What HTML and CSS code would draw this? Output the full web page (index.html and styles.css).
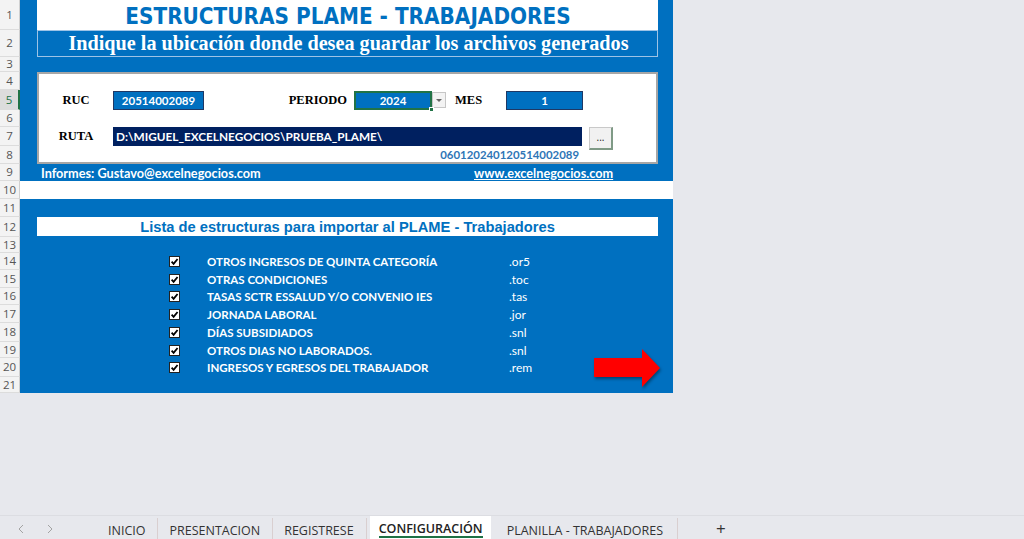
FILE: index.html
```html
<!DOCTYPE html>
<html lang="es">
<head>
<meta charset="utf-8">
<title>Estructuras PLAME - Trabajadores</title>
<link rel="stylesheet" href="styles.css">
</head>
<body>
<div class="app">
  <div class="sheet-grid">
    <div class="rh">1</div>
    <div class="rh">2</div>
    <div class="rh">3</div>
    <div class="rh">4</div>
    <div class="rh rh-active">5</div>
    <div class="rh">6</div>
    <div class="rh">7</div>
    <div class="rh">8</div>
    <div class="rh">9</div>
    <div class="rh">10</div>
    <div class="rh">11</div>
    <div class="rh">12</div>
    <div class="rh">13</div>
    <div class="rh">14</div>
    <div class="rh">15</div>
    <div class="rh">16</div>
    <div class="rh">17</div>
    <div class="rh">18</div>
    <div class="rh">19</div>
    <div class="rh">20</div>
    <div class="rh">21</div>

    <section class="top">
      <div class="title">ESTRUCTURAS PLAME - TRABAJADORES</div>
      <div class="subtitle">Indique la ubicación donde desea guardar los archivos generados</div>
      <div class="spacer"></div>
      <div class="panel">
        <div class="prow prow-4"></div>
        <div class="prow prow-5">
          <div class="lbl">RUC</div>
          <div class="cell cell-ruc">20514002089</div>
          <div class="lbl lbl-periodo">PERIODO</div>
          <div class="cell cell-year">2024<span class="handle"></span></div>
          <div class="dd"><span class="dd-arrow"></span></div>
          <div class="lbl lbl-mes">MES</div>
          <div class="cell cell-mes">1</div>
        </div>
        <div class="prow prow-6"></div>
        <div class="prow prow-7">
          <div class="lbl">RUTA</div>
          <div class="cell cell-ruta">D:\MIGUEL_EXCELNEGOCIOS\PRUEBA_PLAME\</div>
          <div class="btn-dots">...</div>
        </div>
        <div class="prow prow-8">
          <div class="code">060120240120514002089</div>
        </div>
      </div>
      <div class="footer">
        <div class="mail">Informes: Gustavo@excelnegocios.com</div>
        <div class="web">www.excelnegocios.com</div>
      </div>
    </section>

    <div class="blank-row"></div>

    <section class="bottom">
      <div class="brow-11"></div>
      <div class="lista">Lista de estructuras para importar al PLAME - Trabajadores</div>
      <div class="brow-13"></div>
      <div class="item r14"><span class="cb"><svg viewBox="0 0 10 10" width="9" height="9"><path d="M1.8 5.2 L4 7.6 L8.4 2.2" fill="none" stroke="#000" stroke-width="2"/></svg></span><span class="item-lbl">OTROS INGRESOS DE QUINTA CATEGORÍA</span><span class="ext">.or5</span></div>
      <div class="item r15"><span class="cb"><svg viewBox="0 0 10 10" width="9" height="9"><path d="M1.8 5.2 L4 7.6 L8.4 2.2" fill="none" stroke="#000" stroke-width="2"/></svg></span><span class="item-lbl">OTRAS CONDICIONES</span><span class="ext">.toc</span></div>
      <div class="item r16"><span class="cb"><svg viewBox="0 0 10 10" width="9" height="9"><path d="M1.8 5.2 L4 7.6 L8.4 2.2" fill="none" stroke="#000" stroke-width="2"/></svg></span><span class="item-lbl">TASAS SCTR ESSALUD Y/O CONVENIO IES</span><span class="ext">.tas</span></div>
      <div class="item r17"><span class="cb"><svg viewBox="0 0 10 10" width="9" height="9"><path d="M1.8 5.2 L4 7.6 L8.4 2.2" fill="none" stroke="#000" stroke-width="2"/></svg></span><span class="item-lbl">JORNADA LABORAL</span><span class="ext">.jor</span></div>
      <div class="item r18"><span class="cb"><svg viewBox="0 0 10 10" width="9" height="9"><path d="M1.8 5.2 L4 7.6 L8.4 2.2" fill="none" stroke="#000" stroke-width="2"/></svg></span><span class="item-lbl">DÍAS SUBSIDIADOS</span><span class="ext">.snl</span></div>
      <div class="item r19"><span class="cb"><svg viewBox="0 0 10 10" width="9" height="9"><path d="M1.8 5.2 L4 7.6 L8.4 2.2" fill="none" stroke="#000" stroke-width="2"/></svg></span><span class="item-lbl">OTROS DIAS NO LABORADOS.</span><span class="ext">.snl</span></div>
      <div class="item r20"><span class="cb"><svg viewBox="0 0 10 10" width="9" height="9"><path d="M1.8 5.2 L4 7.6 L8.4 2.2" fill="none" stroke="#000" stroke-width="2"/></svg></span><span class="item-lbl">INGRESOS Y EGRESOS DEL TRABAJADOR</span><span class="ext">.rem</span></div>
      <div class="brow-21"></div>
      <svg class="arrow" viewBox="0 0 70 42" width="70" height="42"><polygon points="1,9 49,9 49,0 67,19 49,38 49,28 1,28" fill="#ff0000"/></svg>
    </section>
  </div>

  <div class="fill"></div>

  <nav class="tabbar">
    <span class="nav-arrow"><svg viewBox="0 0 6 10" width="6" height="10"><path d="M5 1 L1 5 L5 9" fill="none" stroke="#a3a3a3" stroke-width="1"/></svg></span>
    <span class="nav-arrow nav-next"><svg viewBox="0 0 6 10" width="6" height="10"><path d="M1 1 L5 5 L1 9" fill="none" stroke="#a3a3a3" stroke-width="1"/></svg></span>
    <span class="tab tab-first">INICIO</span>
    <span class="tab">PRESENTACION</span>
    <span class="tab">REGISTRESE</span>
    <span class="tab tab-active">CONFIGURACIÓN</span>
    <span class="tab tab-last">PLANILLA - TRABAJADORES</span>
    <span class="tab-add">+</span>
  </nav>
</div>
</body>
</html>
```

FILE: styles.css
```css
* { box-sizing: border-box; }

html, body {
  margin: 0;
  padding: 0;
  width: 1024px;
  height: 539px;
  overflow: hidden;
}

body {
  background: #e7e8ed;
  font-family: "Lato", "Open Sans", sans-serif;
}

.app {
  display: flex;
  flex-direction: column;
  height: 539px;
}

.sheet-grid {
  display: grid;
  grid-template-columns: 20px 653px;
  grid-template-rows: 30px 27px 15px 18px 20px 17px 19px 18px 17px 18px 18px 20px 16px 17px 18px 17px 18px 19px 16px 19px 16px;
}

/* Row headers */
.rh {
  grid-column: 1;
  background: #f3f3f3;
  border-bottom: 1px solid #dcdcdc;
  border-right: 1px solid #d0d0d0;
  color: #555;
  font-family: "Open Sans", sans-serif;
  font-size: 11.5px;
  display: flex;
  align-items: center;
  justify-content: center;
  line-height: 1;
}

.rh-active {
  background: #dcdcdc;
  color: #217346;
  border-right: 2px solid #217346;
}

/* Top blue block */
.top {
  grid-column: 2;
  grid-row: 1 / 10;
  background: #0070c0;
  padding: 0 15px 0 17px;
  display: grid;
  grid-template-rows: 30px 27px 15px 92px 17px;
}

.title {
  background: #fff;
  color: #0070c0;
  font-family: "DejaVu Sans Condensed", "DejaVu Sans", sans-serif;
  font-weight: bold;
  font-size: 22.3px;
  display: flex;
  align-items: center;
  justify-content: center;
  padding-top: 1px;
  padding-left: 1px;
}

.subtitle {
  background: #0070c0;
  border: 1px solid #9dc3e6;
  color: #fff;
  font-family: "Liberation Serif", serif;
  font-weight: bold;
  font-size: 20.2px;
  display: flex;
  align-items: center;
  justify-content: center;
  padding-left: 2px;
}

.panel {
  background: #fff;
  border: 2px solid #a6a6a6;
  display: grid;
  grid-template-rows: 16px 20px 17px 19px 16px;
}

.prow {
  display: flex;
  align-items: center;
}

.lbl {
  width: 74px;
  text-align: center;
  font-family: "Liberation Serif", serif;
  font-weight: bold;
  font-size: 12.5px;
  color: #000;
}

.lbl-periodo {
  width: 150px;
  text-align: right;
  padding-right: 7px;
}

.lbl-mes {
  width: 60px;
  text-align: left;
  padding-left: 9px;
}

.cell {
  height: 19px;
  background: #0070c0;
  color: #fff;
  font-weight: bold;
  font-size: 11.5px;
  display: flex;
  align-items: center;
  justify-content: center;
  border: 1px solid #1f3864;
}

.prow-5 .cell { margin-top: 1px; }

.cell-ruc { width: 91px; }

.cell-year {
  width: 78px;
  border: 1px solid #217346;
  box-shadow: inset 0 0 0 1px #217346;
  position: relative;
}

.handle {
  position: absolute;
  right: -3px;
  bottom: -3px;
  width: 5px;
  height: 5px;
  background: #217346;
  border: 1px solid #fff;
}

.dd {
  width: 14px;
  height: 16px;
  background: #f3f3f3;
  border: 1px solid #c6c6c6;
  display: flex;
  align-items: center;
  justify-content: center;
}

.dd-arrow {
  width: 0;
  height: 0;
  border-left: 3px solid transparent;
  border-right: 3px solid transparent;
  border-top: 3px solid #666;
}

.cell-mes { width: 77px; }

.cell-ruta {
  width: 469px;
  background: #002060;
  border-color: #002060;
  justify-content: flex-start;
  padding-left: 2px;
  font-size: 11.8px;
}

.prow-7 { align-items: flex-start; }
.prow-7 .lbl { align-self: center; }

.btn-dots {
  margin-left: 7px;
  width: 24px;
  height: 23px;
  background: #f1f1f1;
  border: 1px solid #c9c9c9;
  border-right: 2px solid #7f9a86;
  border-bottom: 2px solid #7f9a86;
  font-family: "Open Sans", sans-serif;
  font-size: 10px;
  color: #222;
  display: flex;
  align-items: center;
  justify-content: center;
  padding-bottom: 2px;
}

.code {
  width: 100%;
  text-align: right;
  padding-right: 77px;
  color: #2e75b6;
  font-weight: bold;
  font-size: 11.4px;
}

.footer {
  display: flex;
  align-items: center;
  padding-left: 4px;
  color: #fff;
  font-weight: bold;
  font-size: 12.7px;
}

.mail { width: 433px; }

.web { text-decoration: underline; }

.blank-row {
  grid-column: 2;
  grid-row: 10;
  background: #fff;
}

/* Bottom blue block */
.bottom {
  grid-column: 2;
  grid-row: 11 / 22;
  background: #0070c0;
  position: relative;
  display: grid;
  grid-template-rows: 18px 20px 16px 17px 18px 17px 18px 19px 16px 19px 16px;
}

.lista {
  margin: 0 15px 0 17px;
  height: 19px;
  background: #fff;
  color: #0070c0;
  font-family: "Liberation Sans", Arial, sans-serif;
  font-weight: bold;
  font-size: 14.7px;
  display: flex;
  align-items: center;
  justify-content: center;
}

.item {
  display: flex;
  align-items: center;
  padding-left: 149px;
  color: #fff;
  font-size: 11.5px;
}

.cb {
  width: 11px;
  height: 11px;
  background: #fff;
  border: 1px solid #222;
  display: flex;
  align-items: center;
  justify-content: center;
  flex-shrink: 0;
}

.cb svg { display: block; }

.item-lbl {
  margin-left: 27px;
  width: 302px;
  font-weight: bold;
}

.ext {
  font-weight: normal;
  font-size: 12px;
}

.arrow {
  position: absolute;
  left: 573px;
  top: 150px;
  filter: drop-shadow(1px 2px 1.5px rgba(0, 0, 0, 0.4));
}

.fill { flex: 1; }

/* Tab bar */
.tabbar {
  height: 24px;
  border-top: 1px solid #dcdde2;
  display: flex;
  align-items: stretch;
  font-family: "Open Sans", sans-serif;
  font-size: 12.5px;
  color: #333;
}

.nav-arrow {
  display: flex;
  align-items: center;
  margin-left: 18px;
  width: 10px;
  padding-top: 3px;
}

.nav-arrow svg { display: block; }

.nav-next { margin-left: 19px; }

.tab {
  display: flex;
  align-items: center;
  padding: 4px 12px 0 11px;
  margin: 2px 0 0;
  border-right: 1px solid #d9cfd0;
}

.tab-first { margin-left: 40px; }

.tab-active {
  background: #fff;
  font-weight: 600;
  color: #222;
  padding: 2px 8px 0 9px;
  margin-left: 3px;
  margin-top: 0;
  border-right: none;
  position: relative;
}

.tab-active::after {
  content: "";
  position: absolute;
  left: 9px;
  right: 8px;
  bottom: 1px;
  height: 2px;
  background: #1e7145;
}

.tab-last {
  margin-left: 5px;
  padding-right: 14px;
}

.tab-add {
  display: flex;
  align-items: center;
  margin-left: 38px;
  font-size: 17px;
  color: #333;
  padding-top: 1px;
}
```
